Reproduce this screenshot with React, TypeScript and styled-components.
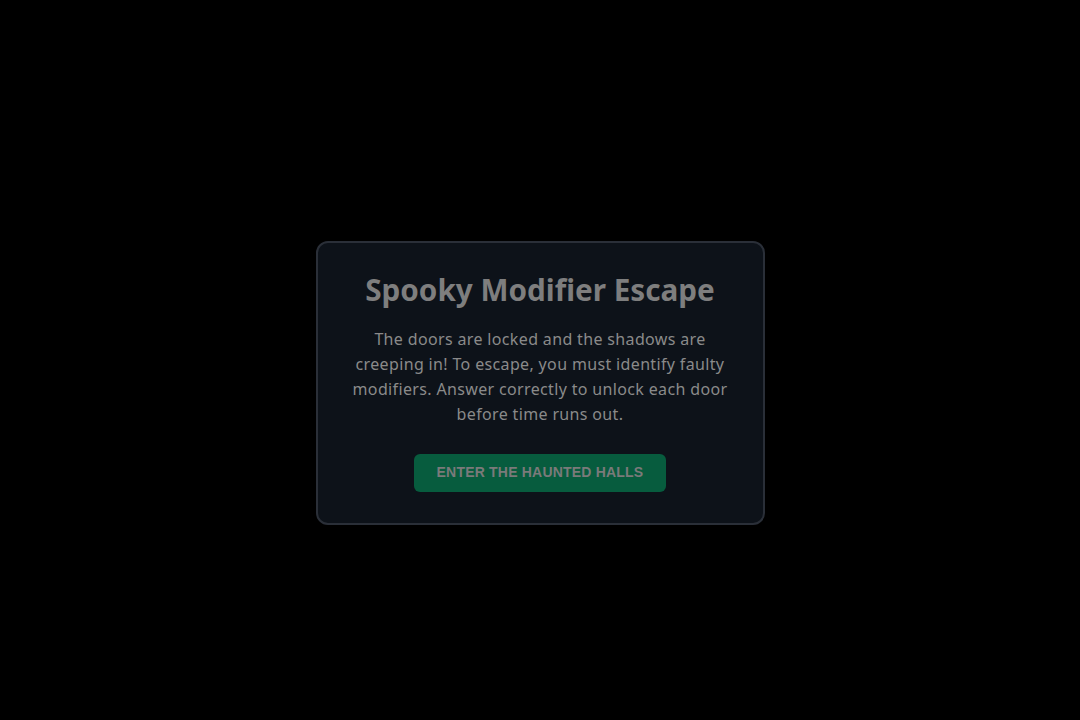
import styled, { createGlobalStyle } from 'styled-components';

const GlobalStyle = createGlobalStyle`
    html, body {
        margin: 0;
        padding: 0;
        background: #000000;
    }
    * {
        box-sizing: border-box;
    }
`;

const Page = styled.div`
    min-height: 100vh;
    display: flex;
    justify-content: center;
    align-items: flex-start;
    padding-top: 241px;
    background: #000000;
`;

const Card = styled.div`
    width: 449px;
    height: 284px;
    background: #0d1219;
    border: 2px solid #2a2f38;
    border-radius: 12px;
    padding: 27px 30px 0;
    display: flex;
    flex-direction: column;
    align-items: center;
    text-align: center;
`;

const Title = styled.h1`
    margin: 0;
    font-family: 'Noto Sans', 'Open Sans', sans-serif;
    font-weight: 700;
    font-size: 29.7px;
    line-height: 40px;
    color: #7e7e7e;
`;

const Text = styled.p`
    margin: 17px 0 0;
    font-family: 'Noto Sans', 'Open Sans', sans-serif;
    font-weight: 400;
    font-size: 16px;
    line-height: 25px;
    letter-spacing: 0.35px;
    color: #8a8a8a;
`;

const Button = styled.button`
    margin-top: 27px;
    width: 252px;
    height: 38px;
    padding: 0 0 3px;
    border: none;
    border-radius: 6px;
    background: #075c3e;
    color: #7a7a7a;
    font-family: 'Liberation Sans', Arial, sans-serif;
    font-weight: 700;
    font-size: 14px;
    letter-spacing: 0.2px;
    text-transform: uppercase;
    cursor: pointer;
`;

function App() {
    return (
        <>
            <GlobalStyle />
            <Page>
                <Card>
                    <Title>Spooky Modifier Escape</Title>
                    <Text>
                        The doors are locked and the shadows are
                        <br />
                        creeping in! To escape, you must identify faulty
                        <br />
                        modifiers. Answer correctly to unlock each door
                        <br />
                        before time runs out.
                    </Text>
                    <Button>Enter the Haunted Halls</Button>
                </Card>
            </Page>
        </>
    );
}
export default App;
